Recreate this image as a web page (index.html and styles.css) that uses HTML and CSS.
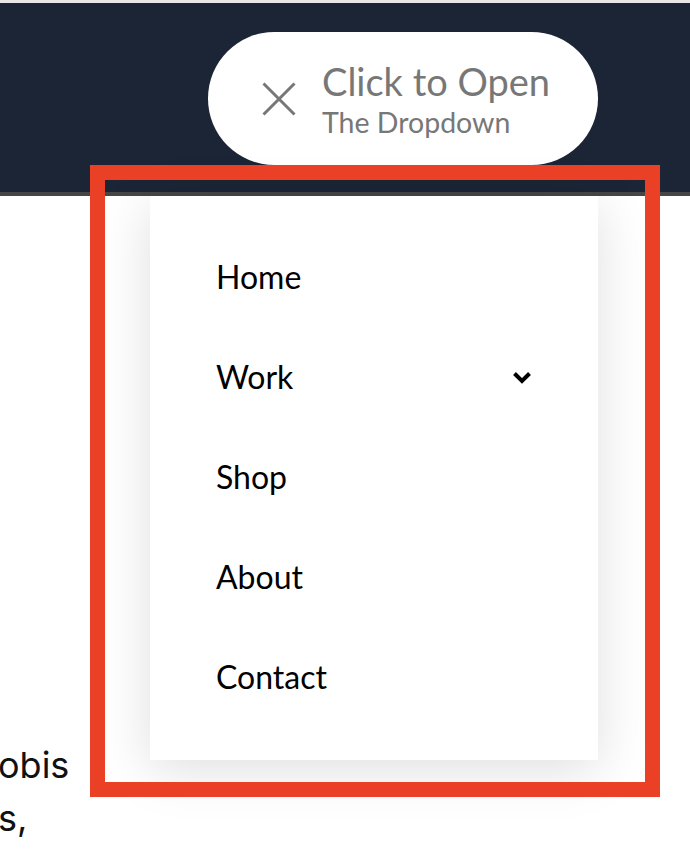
FILE: index.html
```html
<!DOCTYPE html>
<html lang="en">
<head>
    <meta charset="UTF-8">
    <meta name="viewport" content="width=device-width, initial-scale=1.0">
    <title>Dropdown</title>
    <link rel="stylesheet" href="styles.css">
</head>
<body>

    <header class="topbar">
        <!-- botao que abre o menu -->
        <button class="toggle">
            <svg class="toggle-icon" width="34" height="34" viewBox="0 0 34 34">
                <path d="M1.5 1.5 L32.5 32.5 M32.5 1.5 L1.5 32.5" stroke="#777" stroke-width="3" fill="none"/>
            </svg>
            <span class="toggle-text">
                <span class="toggle-title">Click to Open</span>
                <span class="toggle-sub">The Dropdown</span>
            </span>
        </button>
    </header>

    <p class="intro">obis<br>s,</p>

    <!-- Menu aberto -->
    <nav class="menu">
        <ul>
            <li><a href="#">Home</a></li>
            <li class="has-sub">
                <a href="#">Work</a>
                <svg class="chevron" width="20" height="13" viewBox="0 0 20 13">
                    <path d="M2.5 2.5 L10 10 L17.5 2.5" stroke="#000" stroke-width="4" fill="none"/>
                </svg>
            </li>
            <li><a href="#">Shop</a></li>
            <li><a href="#">About</a></li>
            <li><a href="#">Contact</a></li>
        </ul>
    </nav>

    <div class="highlight"></div>

</body>
</html>
```

FILE: styles.css
```css
body {
    margin: 0;
    background-color: #fff;
    font-family: Lato, "Open Sans", sans-serif;
    position: relative;
    overflow: hidden;
    height: 854px;
}

/* Barra do topo */
.topbar {
    height: 160px;
    background-color: #1b2535;
    border-top: 3px solid #e8e8e8;
    border-bottom: 4px solid #464646;
    display: flex;
    justify-content: flex-end;
    align-items: flex-start;
    padding: 29px 92px 0 0;
    box-sizing: content-box;
}

.toggle {
    width: 390px;
    height: 133px;
    border-radius: 67px;
    background-color: #fff;
    border: none;
    display: flex;
    align-items: center;
    gap: 26px;
    padding: 0 0 0 54px;
    font-family: Lato, sans-serif;
    cursor: pointer;
}
.toggle-icon {
    flex-shrink: 0;
}
.toggle-text {
    display: flex;
    flex-direction: column;
    align-items: flex-start;
    color: #777;
}
.toggle-title {
    font-size: 38px;
    line-height: 40px;
}
.toggle-sub {
    font-size: 28.5px;
    line-height: 30px;
    margin-top: 6px;
}

/* Texto da pagina */
.intro {
    font-family: Inter, sans-serif;
    font-size: 36px;
    line-height: 53px;
    color: #111;
    margin: 543px 0 0 -2px;
}

/* Menu aberto */
.menu {
    position: absolute;
    left: 150px;
    top: 196px;
    width: 448px;
    background-color: #fff;
    box-shadow: 0 10px 50px rgba(0, 0, 0, 0.13);
    padding: 31px 66px 33px;
    box-sizing: border-box;
}
.menu ul {
    list-style: none;
    margin: 0;
    padding: 0;
}
.menu li {
    height: 100px;
    line-height: 100px;
    display: flex;
    justify-content: space-between;
    align-items: center;
}
.menu a {
    font-size: 32px;
    color: #000;
    text-decoration: none;
}

/* Moldura vermelha */
.highlight {
    position: absolute;
    left: 90px;
    top: 165px;
    width: 570px;
    height: 632px;
    border: 15px solid #ea4025;
    box-sizing: border-box;
    pointer-events: none;
}
```
